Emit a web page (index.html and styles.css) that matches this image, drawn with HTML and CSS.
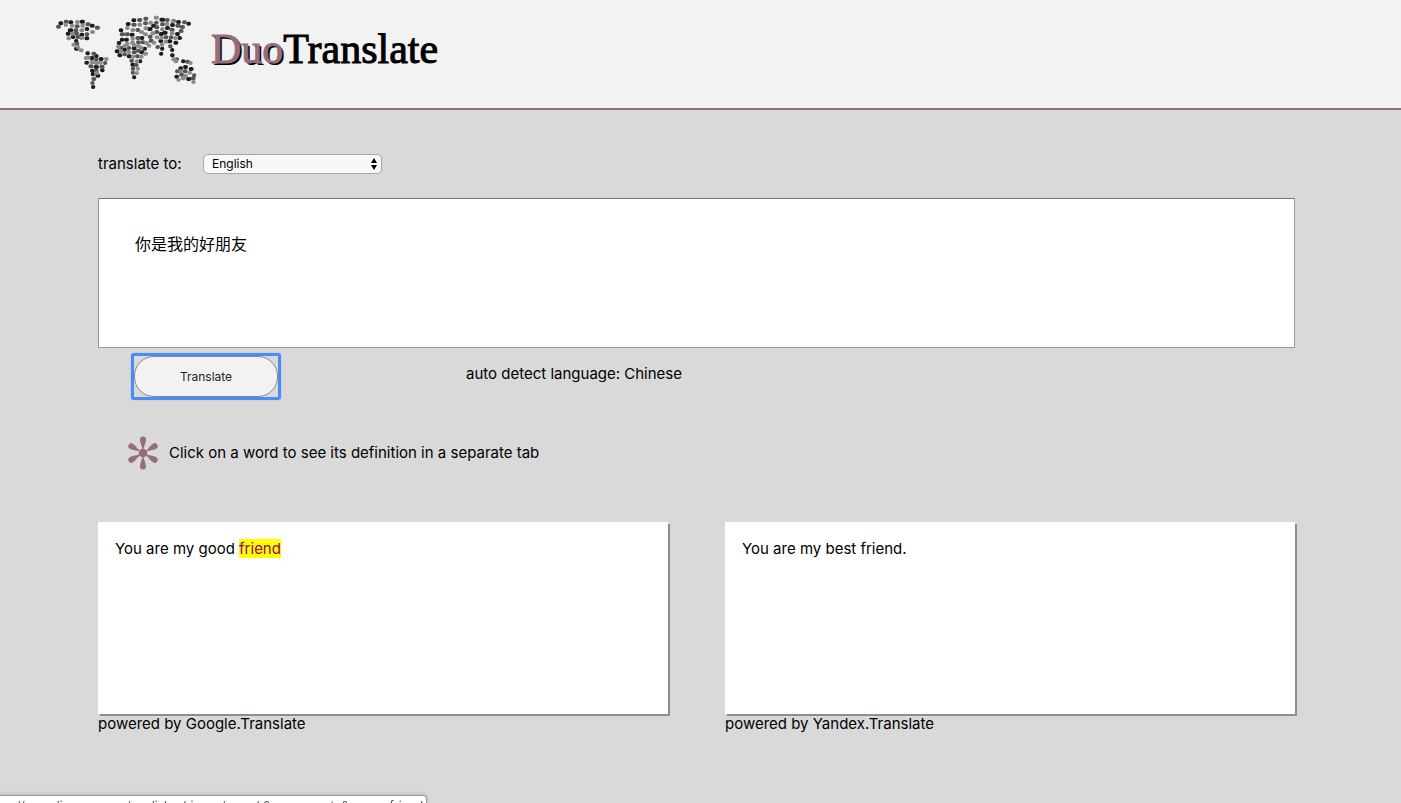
FILE: index.html
```html
<!DOCTYPE html>
<html lang="en">
<head>
<meta charset="utf-8">
<title>DuoTranslate</title>
<link rel="stylesheet" href="styles.css">
</head>
<body>
<header class="site-header">
  <svg class="map" viewBox="0 0 456 255" aria-hidden="true">
    <g class="dots">
      <path class="dark" d="M31 46h3M61 43h3M95 41h4M59 67h5M53 77h3M94 80h3M110 63h2M125 53h3M68 87h2M109 91h3M78 99h1M78 122h3M112 136h2M109 164h2M138 144h2M152 153h3M137 177h4M156 187h2M128 199h1M142 203h3M124 150h3M129 237h1M126 188h2"/>
      <path class="mid" d="M24 56h3M47 41h3M80 55h3M76 67h3M77 76h4M82 87h3M112 49h4M140 59h4M110 79h2M79 107h3M138 155h2M121 175h4M154 176h4M137 188h3M130 213h3M127 225h1M165 165h1M130 137h3"/>
      <path class="light" d="M81 42h3M65 53h2M97 53h2M66 77h3M70 110h1M126 72h3M94 90h2M55 91h2M92 127h3M168 153h2M150 164h2M124 162h4M140 195h2M113 149h3M94 67h3M47 51h1M83 117h1M107 150h1M138 166h2"/>
      <g transform="translate(180 0)">
        <path class="dark" d="M70 37h3M53 48h3M32 67h2M65 80h3M117 63h5M129 53h3M154 35h6M171 60h3M186 51h3M204 42h3M235 47h2M201 78h3M163 74h4M152 78h3M95 90h2M35 95h2M48 95h3M26 105h2M20 130h4M42 125h3M71 121h3M94 133h3M28 142h3M56 145h4M90 160h1M67 170h3M72 208h1M103 122h2M151 99h3M177 100h4M196 104h3M156 122h1M153 137h1M186 126h1M186 142h2M208 90h2M225 177h3M211 181h2M199 206h2M234 213h4M219 160h1M242 183h3"/>
        <path class="mid" d="M87 36h4M106 32h3M70 50h4M105 46h3M138 44h2M171 36h2M190 39h2M222 43h3M202 53h4M216 57h3M184 65h4M139 72h3M156 49h3M82 66h3M35 79h4M50 79h4M82 90h4M119 86h3M122 98h3M96 103h4M166 88h3M182 88h2M212 69h3M32 119h2M56 120h2M84 128h2M43 139h2M71 133h3M81 145h3M64 158h2M78 171h2M68 182h2M68 194h1M142 117h2M180 115h2M200 154h1M224 190h3M201 190h3M213 200h3M248 211h3M84 103h1M231 161h3M252 202h1M139 58h3"/>
        <path class="light" d="M137 29h4M88 50h3M121 44h2M106 61h3M170 48h2M188 40h1M67 66h3M51 60h2M93 72h3M67 92h2M105 79h3M127 76h3M140 88h2M156 64h2M154 90h1M185 76h3M195 90h2M66 104h3M50 108h3M71 111h2M84 114h2M24 116h2M43 114h2M92 119h3M55 132h2M32 130h2M105 137h3M68 146h2M93 146h2M80 160h2M83 182h1M80 195h1M108 105h3M116 113h2M155 110h2M131 104h2M167 101h1M190 154h3M197 160h2M241 165h1M238 194h2M226 204h2M218 211h3M250 222h1M205 215h1M212 190h1"/>
      </g>
    </g>
  </svg>
  <h1 class="brand"><span class="brand-duo">Duo</span>Translate</h1>
</header>
<main class="content">
  <form class="translator">
    <div class="language-row">
      <label class="target-label" for="target">translate to:</label>
      <span class="select-wrap">
        <select id="target" class="language-select"><option>English</option><option>Chinese</option></select>
        <svg class="arrows" viewBox="0 0 6 12" aria-hidden="true"><path d="M3 0L6 5H0zM3 12L0 7H6z"/></svg>
      </span>
    </div>
    <textarea class="source" aria-label="Text to translate">你是我的好朋友</textarea>
    <div class="action-row">
      <button class="translate-button" type="button">Translate</button>
      <p class="detected">auto detect language: Chinese</p>
    </div>
  </form>
  <div class="hint">
    <svg class="asterisk" viewBox="0 0 30 34" aria-hidden="true">
      <defs><path id="petal" d="M15 16C14.3 10 12 7 12 3.5A3 3 0 0 1 18 3.5C18 7 15.7 10 15 16z"/></defs>
      <circle cx="15" cy="17" r="4.3"/>
      <use href="#petal"/><use href="#petal" transform="rotate(60 15 17)"/><use href="#petal" transform="rotate(120 15 17)"/><use href="#petal" transform="rotate(180 15 17)"/><use href="#petal" transform="rotate(240 15 17)"/><use href="#petal" transform="rotate(300 15 17)"/>
    </svg>
    <p>Click on a word to see its definition in a separate tab</p>
  </div>
  <div class="results">
    <section>
      <p class="result">You are my good <a class="word" href="#friend">friend</a></p>
      <p class="credit">powered by Google.Translate</p>
    </section>
    <section>
      <p class="result">You are my best friend.</p>
      <p class="credit">powered by Yandex.Translate</p>
    </section>
  </div>
</main>
<div class="link-status"><span>https://www.linguee.com/english-chinese/search?source=auto&amp;query=friend</span></div>
</body>
</html>
```

FILE: styles.css
```css
* { box-sizing: border-box; }
body {
  margin: 0;
  background: #d9d9d9;
  color: #000;
  font: 15px/20px Inter, "Noto Sans CJK SC", sans-serif;
}
p, h1 { margin: 0; }
.site-header {
  display: flex;
  align-items: flex-start;
  gap: 9px;
  padding: 8px 50px 15px;
  background: #f2f2f2;
  border-bottom: 2px solid #956d7e;
}
.map { width: 152px; height: 85px; }
.dots path { fill: none; stroke-width: 12; stroke-linecap: round; }
.dots .dark { stroke: #1c1c1c; }
.dots .mid { stroke: #555; }
.dots .light { stroke: #8b8b8b; }
.brand {
  padding-top: 17px;
  font: 42px/48px "Liberation Serif", serif;
  -webkit-text-stroke: 1px currentColor;
}
.brand-duo { color: #956d7e; text-shadow: 2px 2px 0 #000; }
.content { padding: 44px 106px 60px 98px; }
.language-row { display: flex; align-items: center; gap: 16px; }
.target-label { min-width: 89px; }
.select-wrap { position: relative; display: flex; }
.language-select {
  appearance: none;
  width: 179px;
  height: 20px;
  padding: 0 8px;
  border: 1px solid #a6a6a6;
  border-radius: 5px;
  background: #f8f8f8;
  color: #000;
  font: 12px/16px Inter, sans-serif;
}
.arrows { position: absolute; right: 5px; top: 4px; width: 6px; height: 12px; pointer-events: none; }
.source {
  display: block;
  width: 100%;
  height: 150px;
  margin-top: 24px;
  padding: 32px 36px;
  border: 1px solid #999;
  border-top-color: #777;
  border-radius: 0;
  background: #fff;
  color: #000;
  font: 16px/24px "Noto Sans CJK SC", sans-serif;
  resize: none;
}
.action-row { display: flex; align-items: flex-start; gap: 188px; padding: 8px 36px 0; }
.translate-button {
  width: 144px;
  height: 41px;
  border: 1px solid #888;
  border-radius: 20px;
  background: #f2f2f2;
  color: #222;
  font: 12px/16px Inter, sans-serif;
  position: relative;
}
.translate-button::after {
  content: "";
  position: absolute;
  inset: -4px;
  border: 3px solid #4a8cf5;
  border-radius: 3px;
  box-shadow: 0 0 1px #4a8cf5;
}
.detected { padding-top: 8px; }
.hint { display: flex; align-items: center; gap: 11px; padding: 39px 30px 0; }
.asterisk { width: 30px; height: 34px; fill: #956d7e; }
.results { display: grid; grid-template-columns: 1fr 1fr; gap: 57px; margin-top: 52px; }
.result {
  min-height: 192px;
  padding: 17px;
  background: #fff;
  box-shadow: 2px 2px 0 #8e8e8e;
}
.word { background: #ff0; color: #906; text-decoration: none; }
.credit { position: relative; }
.link-status {
  position: fixed;
  left: 0;
  bottom: 0;
  display: flex;
  justify-content: flex-end;
  width: 427px;
  height: 8px;
  padding: 2px 3px 0;
  overflow: hidden;
  border: 1px solid #999;
  border-width: 1px 1px 0 0;
  border-radius: 0 4px 0 0;
  background: #fff;
  box-shadow: 0 0 4px #aaa;
  color: #555;
  font: 12px/16px Inter, sans-serif;
  white-space: nowrap;
}
```
